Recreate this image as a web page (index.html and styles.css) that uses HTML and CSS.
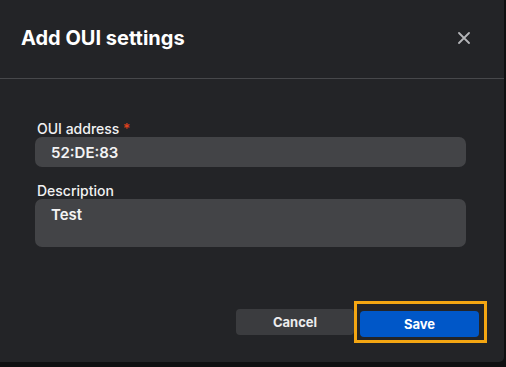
FILE: index.html
```html
<!DOCTYPE html>
<html>
<head>
  <meta charset="UTF-8">
  <title>Add OUI settings</title>
  <link rel="stylesheet" href="styles.css">
</head>
<body>
  <div class="dialog">
    <div class="dialog-header">
      <h1 class="title">Add OUI settings</h1>
      <button class="close" aria-label="Close">
        <svg width="12" height="12" viewBox="0 0 12 12">
          <path d="M1 1 L11 11 M11 1 L1 11" stroke="#b4b5b8" stroke-width="1.8" stroke-linecap="round"/>
        </svg>
      </button>
    </div>
    <div class="dialog-body">
      <div class="field">
        <label class="label">OUI address <span class="req">*</span></label>
        <input class="input" type="text" value="52:DE:83">
      </div>
      <div class="field">
        <label class="label">Description</label>
        <textarea class="input textarea">Test</textarea>
      </div>
    </div>
    <div class="dialog-footer">
      <button class="btn btn-cancel">Cancel</button>
      <div class="focus-ring">
        <button class="btn btn-save">Save</button>
      </div>
    </div>
  </div>
</body>
</html>
```

FILE: styles.css
```css
* {
  margin: 0;
  padding: 0;
  box-sizing: border-box;
}

body {
  background: #0f1011;
  font-family: Inter, "Liberation Sans", sans-serif;
  width: 506px;
  height: 367px;
}

.dialog {
  width: 504px;
  height: 362px;
  background: #232427;
  border-radius: 0 0 5px 0;
  display: flex;
  flex-direction: column;
}

.dialog-header {
  height: 79px;
  border-bottom: 1px solid #47484b;
  display: flex;
  align-items: center;
  justify-content: space-between;
  padding: 0 34px 2px 21px;
}

.title {
  font-size: 20px;
  font-weight: 700;
  color: #fff;
}

.close {
  border: 0;
  background: none;
  width: 12px;
  height: 12px;
  display: flex;
}

.dialog-body {
  padding: 41px 38px 0 35px;
  flex: 1;
}

.field {
  display: flex;
  flex-direction: column;
  margin-bottom: 15px;
}

.label {
  font-size: 14px;
  font-weight: 500;
  color: #f1f1f2;
  line-height: 17px;
  padding-left: 2px;
}

.req {
  color: #e0411c;
}

.input {
  border: 0;
  outline: 0;
  background: #434447;
  color: #f4f4f5;
  border-radius: 7px;
  height: 30px;
  padding: 0 16px;
  font-family: Inter, "Liberation Sans", sans-serif;
  font-size: 15px;
  font-weight: 600;
}

.textarea {
  height: 48px;
  resize: none;
  padding-top: 6px;
  line-height: 20px;
}

.dialog-footer {
  display: flex;
  justify-content: flex-end;
  align-items: center;
  padding: 0 17px 19px 0;
}

.btn {
  border: 0;
  height: 26px;
  border-radius: 4px;
  font-family: Inter, "Liberation Sans", sans-serif;
  font-size: 13px;
  font-weight: 700;
  color: #fff;
}

.btn-cancel {
  width: 118px;
  background: #3b3c3f;
  color: #ececed;
}

.focus-ring {
  border: 3px solid #f4a612;
  padding: 7px 5px 3px 3px;
}

.btn-save {
  width: 119px;
  background: #0057c8;
  display: block;
}
```
